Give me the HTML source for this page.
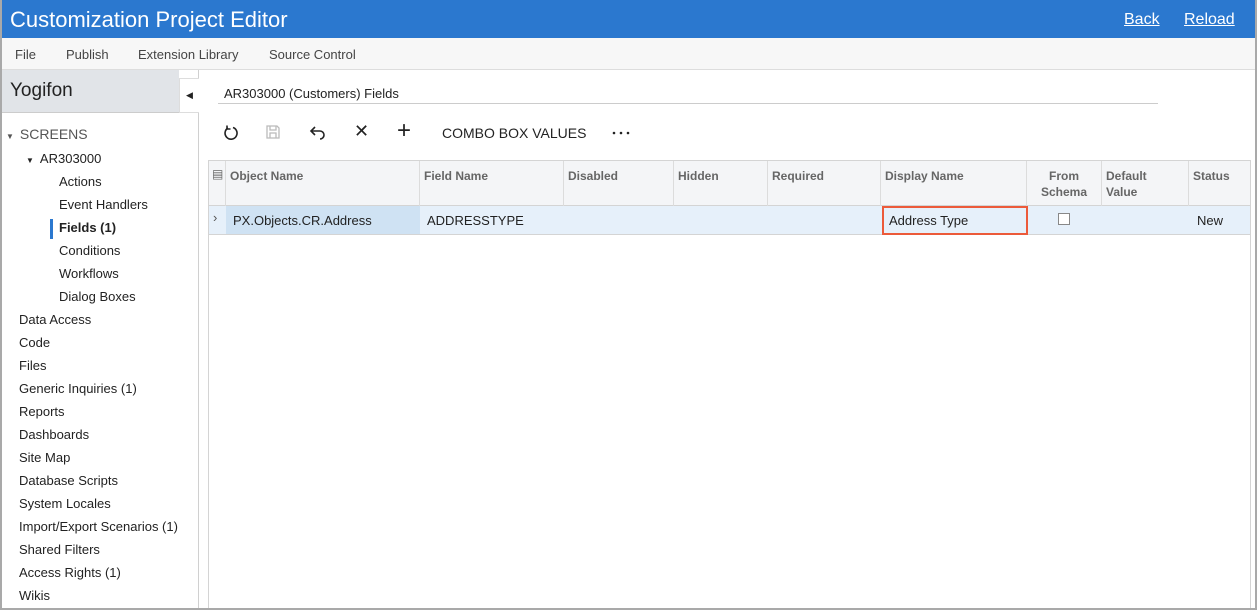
<!DOCTYPE html><html><head><style>
*{box-sizing:border-box;margin:0;padding:0}
body{width:1257px;height:610px;overflow:hidden;font-family:"Liberation Sans",Arial,sans-serif;background:#fff;position:relative;color:#222}
.frame{position:absolute;left:0;top:0;width:1257px;height:610px;border:2px solid #a9a9a9;border-top:none}
.hdr{position:absolute;left:0;top:0;width:1257px;height:38px;background:#2b78cf;color:#fff}
.hdr .t{position:absolute;left:10px;top:7px;font-size:22px}
.hdr a{position:absolute;top:11px;font-size:16px;color:#fff;text-decoration:underline}
.menu{position:absolute;left:2px;top:38px;width:1253px;height:32px;background:#f7f7f7;border-bottom:1px solid #ddd;font-size:13px;color:#444}
.menu span{position:absolute;top:9px}
.left{position:absolute;left:2px;top:70px;width:197px;height:538px;border-right:1px solid #d0d0d0}
.yog{position:absolute;left:0;top:0;width:177px;height:43px;background:#e1e4e8;font-size:19px;color:#222;padding:10px 0 0 8px;border-bottom:1px solid #ccc}
.col{position:absolute;left:177px;top:8px;width:20px;height:35px;background:#fff;border:1px solid #ddd;border-right:none;font-size:9px;text-align:center;line-height:33px}
.it{position:absolute;font-size:13px;color:#222;white-space:nowrap}
.tit{position:absolute;left:218px;top:80px;width:940px;height:24px;border-bottom:1px solid #ccc;font-size:13px;padding:6px 0 0 6px}
.tb{position:absolute;top:121px;font-size:18px;color:#222}
.grid{position:absolute;left:208px;top:160px;width:1043px;height:448px;border:1px solid #d4d4d4;border-bottom:none}
.gh{position:absolute;left:0;top:0;width:1041px;height:45px;background:#f4f5f7;border-bottom:1px solid #d4d4d4}
.c{position:absolute;top:0;height:45px;border-right:1px solid #dcdcdc;font-size:12px;font-weight:bold;color:#666;padding:7px 0 0 4px;line-height:16px}
.row{position:absolute;left:0;top:45px;width:1041px;height:29px;background:#e6f0fa;border-bottom:1px solid #d4d4d4;font-size:13px}
.row span{position:absolute;top:7px}
</style></head><body>
<div class="hdr"><div class="t">Customization Project Editor</div><a style="left:1124px">Back</a><a style="left:1184px">Reload</a></div>
<div class="menu"><span style="left:13px">File</span><span style="left:64px">Publish</span><span style="left:136px">Extension Library</span><span style="left:267px">Source Control</span></div>
<div class="left">
<div class="yog">Yogifon</div><div class="col">◀</div>
<div class="it" style="left:4px;top:56px;font-size:14px;color:#555"><span style="font-size:8px;margin-right:6px">▼</span>SCREENS</div>
<div class="it" style="left:24px;top:81px"><span style="font-size:8px;margin-right:6px">▼</span>AR303000</div>
<div class="it" style="left:57px;top:104px">Actions</div>
<div class="it" style="left:57px;top:127px">Event Handlers</div>
<div style="position:absolute;left:48px;top:149px;width:3px;height:20px;background:#2b78cf"></div>
<div class="it" style="left:57px;top:150px;font-weight:bold">Fields (1)</div>
<div class="it" style="left:57px;top:173px">Conditions</div>
<div class="it" style="left:57px;top:196px">Workflows</div>
<div class="it" style="left:57px;top:219px">Dialog Boxes</div>
<div class="it" style="left:17px;top:242px">Data Access</div>
<div class="it" style="left:17px;top:265px">Code</div>
<div class="it" style="left:17px;top:288px">Files</div>
<div class="it" style="left:17px;top:311px">Generic Inquiries (1)</div>
<div class="it" style="left:17px;top:334px">Reports</div>
<div class="it" style="left:17px;top:357px">Dashboards</div>
<div class="it" style="left:17px;top:380px">Site Map</div>
<div class="it" style="left:17px;top:403px">Database Scripts</div>
<div class="it" style="left:17px;top:426px">System Locales</div>
<div class="it" style="left:17px;top:449px">Import/Export Scenarios (1)</div>
<div class="it" style="left:17px;top:472px">Shared Filters</div>
<div class="it" style="left:17px;top:495px">Access Rights (1)</div>
<div class="it" style="left:17px;top:518px">Wikis</div>
</div>
<div class="tit">AR303000 (Customers) Fields</div>
<svg style="position:absolute;left:222px;top:124px" width="18" height="18" viewBox="0 0 18 18" fill="none" stroke="#222" stroke-width="1.6"><path d="M6 4A6 6 0 1 0 11 3.5"/><path d="M5 1.5V5H8.5"/></svg>
<svg style="position:absolute;left:265px;top:124px" width="16" height="16" viewBox="0 0 16 16" fill="none" stroke="#bbb" stroke-width="1.3"><path d="M2 2h10l2 2v10H2z"/><path d="M5 2v4h6V2M5 14v-5h6v5"/></svg>
<svg style="position:absolute;left:309px;top:124px" width="18" height="16" viewBox="0 0 18 16" fill="none" stroke="#222" stroke-width="1.6"><path d="M3 7h8a4 4 0 0 1 0 8"/><path d="M6 3L2 7l4 4"/></svg>
<div class="tb" style="left:354px">✕</div>
<div class="tb" style="left:397px;font-size:24px;top:117px">+</div>
<div class="tb" style="left:442px;top:125px;font-size:14px">COMBO BOX VALUES</div>
<svg style="position:absolute;left:612px;top:131px" width="20" height="4"><circle cx="2" cy="2" r="1.3" fill="#222"/><circle cx="9" cy="2" r="1.3" fill="#222"/><circle cx="16" cy="2" r="1.3" fill="#222"/></svg>
<div class="grid">
<div class="gh">
<div class="c" style="left:0;width:17px;padding:5px 0 0 3px;font-weight:normal">▤</div>
<div class="c" style="left:17px;width:194px">Object Name</div>
<div class="c" style="left:211px;width:144px">Field Name</div>
<div class="c" style="left:355px;width:110px">Disabled</div>
<div class="c" style="left:465px;width:94px">Hidden</div>
<div class="c" style="left:559px;width:113px">Required</div>
<div class="c" style="left:672px;width:146px">Display Name</div>
<div class="c" style="left:818px;width:75px;text-align:center;padding-left:0">From<br>Schema</div>
<div class="c" style="left:893px;width:87px">Default<br>Value</div>
<div class="c" style="left:980px;width:61px;border-right:none">Status</div>
</div>
<div class="row">
<span style="left:4px;top:4px;color:#555">›</span>
<div style="position:absolute;left:17px;top:0;width:194px;height:28px;background:#cfe2f3"></div>
<span style="left:24px">PX.Objects.CR.Address</span>
<span style="left:218px">ADDRESSTYPE</span>
<div style="position:absolute;left:673px;top:0;width:146px;height:29px;border:2px solid #ec5a3a"></div>
<span style="left:680px">Address Type</span>
<div style="position:absolute;left:849px;top:7px;width:12px;height:12px;border:1px solid #888;background:#fff"></div>
<span style="left:988px">New</span>
</div>
</div>
<div class="frame"></div>
</body></html>
